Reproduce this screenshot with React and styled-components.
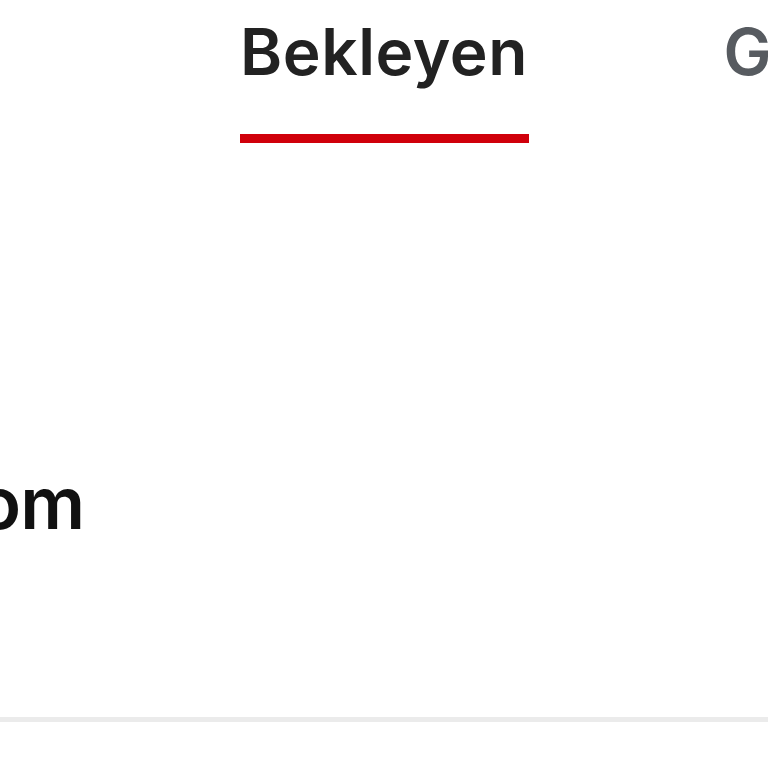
import { createGlobalStyle, styled } from 'styled-components'

const GlobalStyle = createGlobalStyle`
  html, body {
    margin: 0;
    padding: 0;
    background: #fff;
    overflow: hidden;
  }
  body {
    font-family: Inter, "Noto Sans", sans-serif;
  }
`

const Page = styled.div`
  width: 768px;
  height: 768px;
  display: flex;
  flex-direction: column;
  overflow: hidden;
`

const TabBar = styled.div`
  display: grid;
  grid-template-columns: minmax(0, 1fr) auto minmax(0, 1fr);
  padding-top: 14px;
`

const Tab = styled.div`
  display: flex;
  flex-direction: column;
  align-items: ${p => (p.$side === 'right' ? 'flex-start' : 'center')};
  padding-left: ${p => (p.$side === 'right' ? '195px' : '0')};
  white-space: nowrap;
  overflow: hidden;
`

const TabLabel = styled.span`
  font-size: 64px;
  font-weight: 600;
  letter-spacing: 0.6px;
  line-height: 76px;
  color: ${p => (p.$active ? '#222' : '#575b60')};
`

const Indicator = styled.div`
  width: 289px;
  height: 9px;
  margin-top: 44px;
  background: #d0000b;
`

const Content = styled.div`
  flex: 1;
  display: flex;
  flex-direction: column;
  justify-content: flex-end;
`

const Value = styled.div`
  width: 84px;
  display: flex;
  justify-content: flex-end;
  font-size: 72px;
  font-weight: 600;
  letter-spacing: -1px;
  line-height: 80px;
  color: #111;
  margin-bottom: 174px;
`

const Divider = styled.div`
  height: 5px;
  background: #ebebeb;
  margin-bottom: 46px;
`

export default function App() {
  return (
    <Page>
      <GlobalStyle />
      <TabBar>
        <div />
        <Tab>
          <TabLabel $active>Bekleyen</TabLabel>
          <Indicator />
        </Tab>
        <Tab $side='right'>
          <TabLabel>Gönderilen</TabLabel>
        </Tab>
      </TabBar>
      <Content>
        <Value>om</Value>
        <Divider />
      </Content>
    </Page>
  )
}
